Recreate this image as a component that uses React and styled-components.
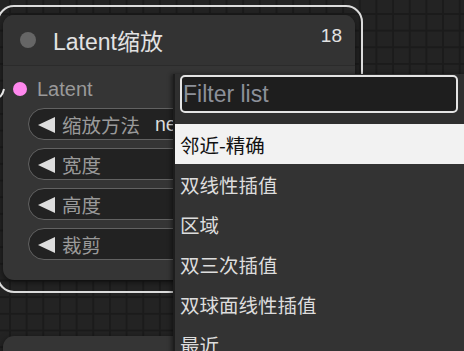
import React from "react";
import styled, { createGlobalStyle } from "styled-components";

const GlobalStyle = createGlobalStyle`
  html, body {
    margin: 0;
    padding: 0;
  }
  body {
    width: 464px;
    height: 351px;
    overflow: hidden;
    background-color: #232323;
    background-image:
      linear-gradient(to right, #1b1b1b 2px, transparent 2px),
      linear-gradient(to bottom, #1b1b1b 2px, transparent 2px);
    background-size: 16.67px 16.67px;
    background-position: 9px 13px;
    font-family: "Liberation Sans", "Noto Sans CJK SC", sans-serif;
  }
`;

const Canvas = styled.div`
  position: relative;
  width: 464px;
  height: 351px;
  overflow: hidden;
`;

const Selection = styled.div`
  position: absolute;
  left: -3px;
  top: 5px;
  width: 366px;
  height: 288px;
  box-sizing: border-box;
  border: 2px solid #dcdcdc;
  border-radius: 17px;
`;

const Node = styled.div`
  position: absolute;
  left: ${(p) => p.x}px;
  top: ${(p) => p.y}px;
  width: ${(p) => p.w}px;
  height: ${(p) => p.h}px;
  background: #353535;
  border-radius: 11px;
  box-shadow: 0 2px 6px rgba(0, 0, 0, 0.55);
  display: flex;
  flex-direction: column;
  overflow: hidden;
`;

const TitleBar = styled.div`
  height: 50px;
  flex-shrink: 0;
  display: flex;
  align-items: center;
  padding: 0 13px 0 17px;
  background: #333333;
  border-bottom: 1px solid #2b2b2b;
  color: #e2e2e2;
`;

const TitleDot = styled.span`
  width: 16px;
  height: 16px;
  border-radius: 50%;
  background: #666666;
  margin-right: 17px;
`;

const Title = styled.span`
  font-size: 23px;
  flex: 1;
`;

const Badge = styled.span`
  font-size: 19px;
  align-self: flex-start;
  margin-top: 10px;
`;

const Body = styled.div`
  display: flex;
  flex-direction: column;
  gap: 8px;
  padding: 7px 25px 0 25px;
`;

const SlotRow = styled.div`
  height: 32px;
  margin: 0 0 -5px -15px;
  display: flex;
  align-items: center;
  color: #9a9a9a;
  font-size: 20px;
`;

const SlotDot = styled.span`
  width: 14px;
  height: 14px;
  border-radius: 50%;
  background: ${(p) => p.color};
  margin-right: 10px;
`;

const Pill = styled.div`
  height: 32px;
  box-sizing: border-box;
  border: 1.5px solid #626262;
  border-radius: 16px;
  background: #222222;
  display: flex;
  align-items: center;
  padding-left: 9px;
  font-size: 19.5px;
  white-space: nowrap;
`;

const Arrow = styled.svg`
  width: 17px;
  height: 16px;
  margin-right: 7px;
  margin-top: 2px;
  flex-shrink: 0;
`;

const PillLabel = styled.span`
  color: #9a9a9a;
`;

const PillValue = styled.span`
  color: #dddddd;
  margin-left: 15px;
`;

const Wire = styled.svg`
  position: absolute;
  left: 0;
  top: 84px;
`;

const Menu = styled.div`
  position: absolute;
  left: 173px;
  top: 74px;
  width: 300px;
  height: 290px;
  background: #2f2f2f;
  border-left: 2px solid #1d1d1d;
  box-shadow: -2px 0 4px rgba(0, 0, 0, 0.4);
  display: flex;
  flex-direction: column;
`;

const FilterInput = styled.input`
  width: 278px;
  height: 38px;
  box-sizing: border-box;
  margin: 1px 0 11px 5px;
  border: 2px solid #e4e4e4;
  border-radius: 5px;
  background: #1e1e1e;
  color: #dddddd;
  font-family: "Liberation Sans", sans-serif;
  font-size: 23px;
  padding: 0 0 0 1px;
  outline: none;
  &::placeholder {
    color: #8c9099;
  }
`;

const Item = styled.div`
  height: 40px;
  flex-shrink: 0;
  display: flex;
  align-items: center;
  padding-left: 5px;
  font-size: 19.5px;
  font-family: "Noto Sans CJK SC", sans-serif;
  background: ${(p) => (p.active ? "#f2f2f2" : "#333333")};
  color: ${(p) => (p.active ? "#111111" : "#dddddd")};
`;

const widgets = [
  { label: "缩放方法", value: "nearest-exact" },
  { label: "宽度", value: "" },
  { label: "高度", value: "" },
  { label: "裁剪", value: "" },
];

const options = ["邻近-精确", "双线性插值", "区域", "双三次插值", "双球面线性插值", "最近"];

export default function App() {
  return (
    <Canvas>
      <GlobalStyle />
      <Selection />
      <Node x={3} y={15} w={352} h={265}>
        <TitleBar>
          <TitleDot />
          <Title>Latent缩放</Title>
          <Badge>18</Badge>
        </TitleBar>
        <Body>
          <SlotRow>
            <SlotDot color="#ff88ee" />
            Latent
          </SlotRow>
          {widgets.map((w) => (
            <Pill key={w.label}>
              <Arrow viewBox="0 0 17 16">
                <polygon points="0,8 17,0 17,16" fill="#dddddd" />
              </Arrow>
              <PillLabel>{w.label}</PillLabel>
              {w.value && <PillValue>{w.value}</PillValue>}
            </Pill>
          ))}
        </Body>
      </Node>
      <Node x={3} y={336} w={352} h={120} />
      <Wire width="6" height="16" viewBox="0 0 6 16">
        <path d="M0 13 Q3 10 4 5" stroke="#e8e8e8" strokeWidth="2" fill="none" />
      </Wire>
      <Menu>
        <FilterInput placeholder="Filter list" />
        {options.map((o, i) => (
          <Item key={o} active={i === 0}>
            {o}
          </Item>
        ))}
      </Menu>
    </Canvas>
  );
}
